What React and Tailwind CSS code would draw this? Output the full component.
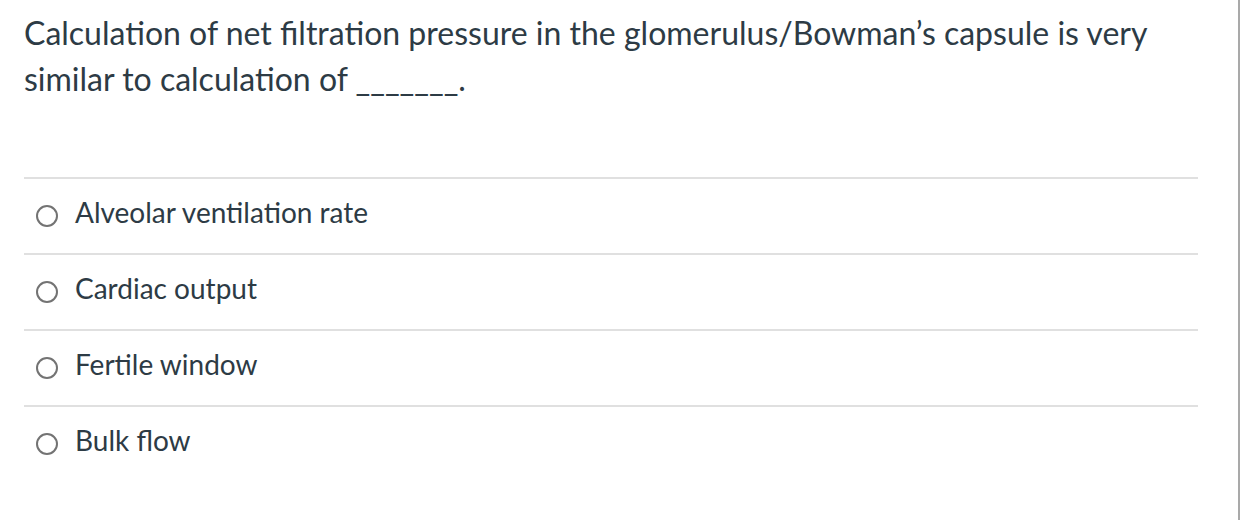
export default function App() {
  const options = ["Alveolar ventilation rate", "Cardiac output", "Fertile window", "Bulk flow"];
  return (
    <div className="w-[1246px] h-[520px] bg-white" style={{ fontFamily: "Lato, 'Noto Sans', sans-serif" }}>
      <div className="w-[1240px] h-[520px] border-r-2 border-[#a9a9a9] pl-[24px] pt-[10px] text-[#2d3b45]">
        <div className="text-[32px] leading-[46px] w-[1174px]">
          Calculation of net filtration pressure in the glomerulus/Bowman’s capsule is very similar to calculation of _______.
        </div>
        <div className="mt-[75px] w-[1174px]">
          {options.map((o) => (
            <div key={o} className="border-t-2 border-[#e0e0e0] h-[76px] flex items-start pl-[12px] pt-[16px]">
              <span className="w-[22px] h-[22px] rounded-full border-2 border-[#737373] mt-[10px] shrink-0"></span>
              <span className="ml-[17px] text-[28px] leading-[34px]">{o}</span>
            </div>
          ))}
        </div>
      </div>
    </div>
  );
}
